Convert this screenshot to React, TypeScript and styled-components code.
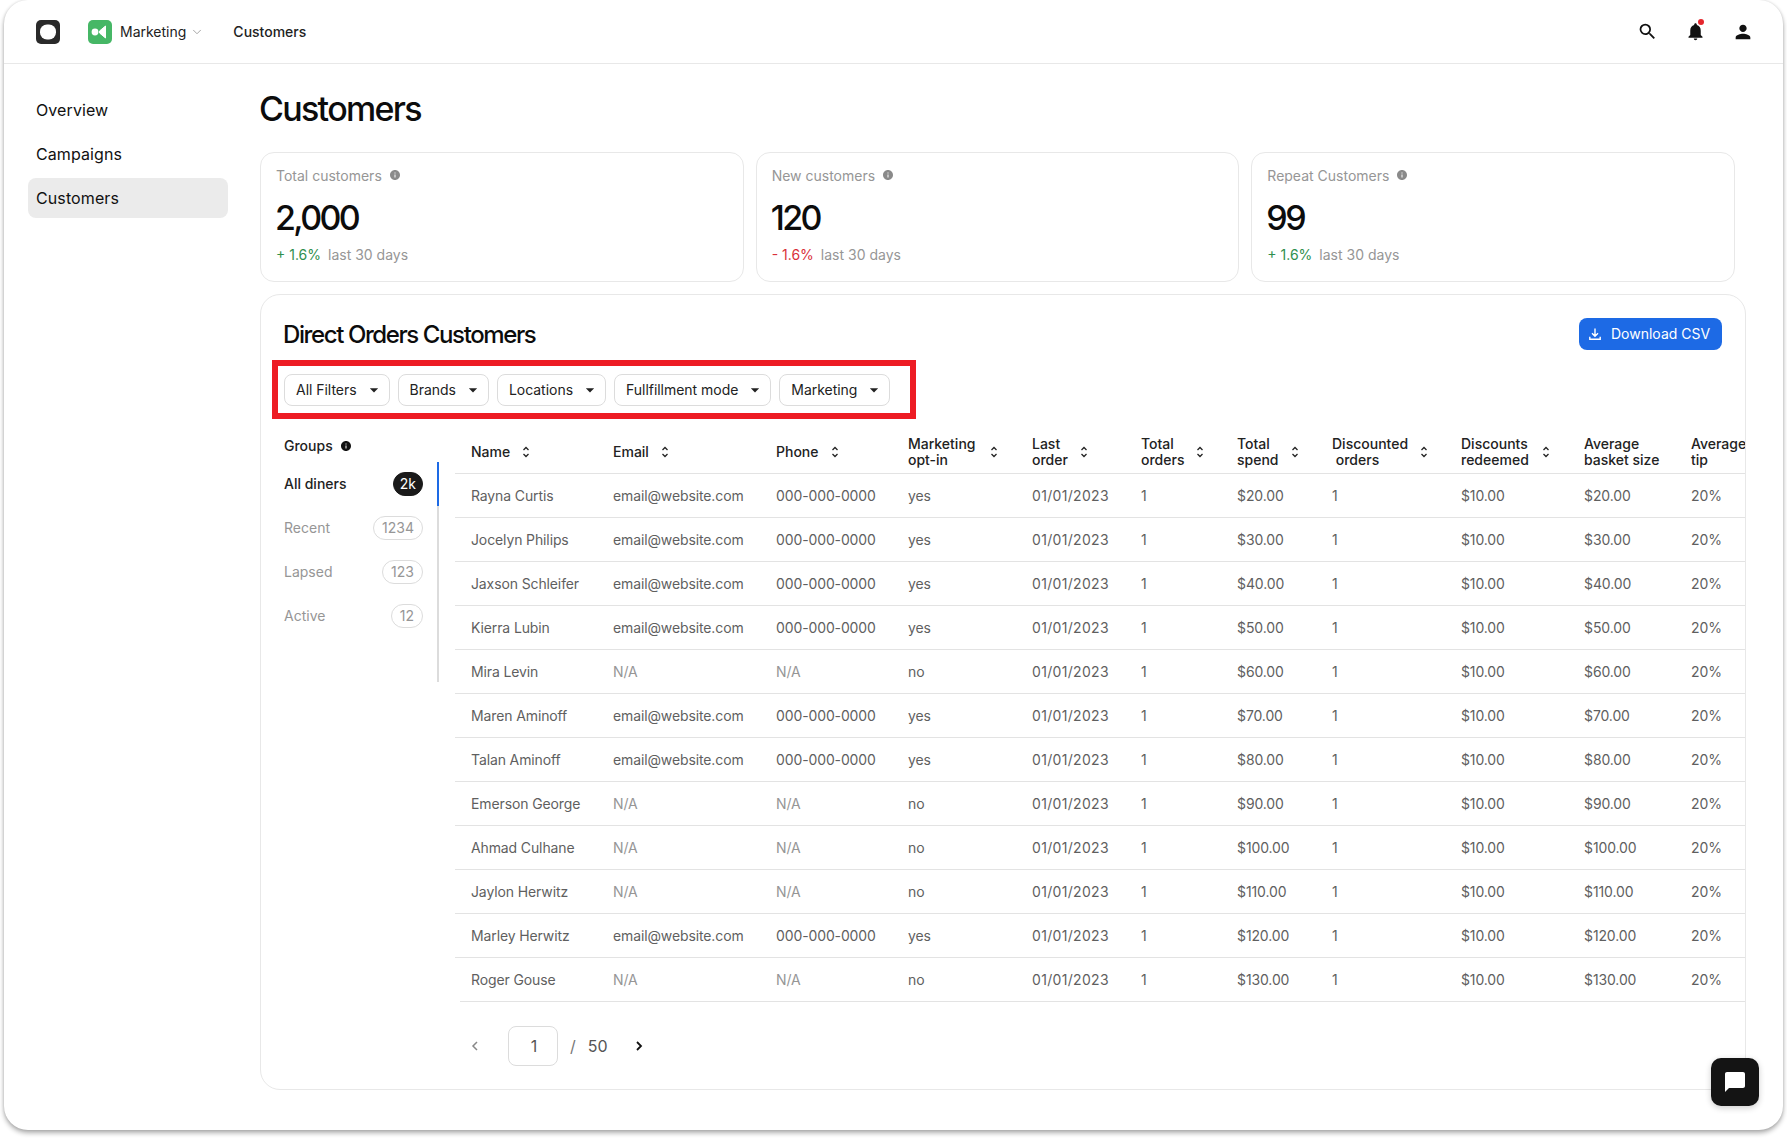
import React from 'react';
import styled, { createGlobalStyle } from 'styled-components';
import { MdSearch, MdNotifications, MdPerson, MdArrowDropDown, MdInfo, MdChatBubble } from 'react-icons/md';
import { ChevronDown } from 'lucide-react';

interface Customer {
  name: string;
  spend: number;
  optIn: boolean;
}

const customers: Customer[] = [
  { name: 'Rayna Curtis', spend: 20, optIn: true },
  { name: 'Jocelyn Philips', spend: 30, optIn: true },
  { name: 'Jaxson Schleifer', spend: 40, optIn: true },
  { name: 'Kierra Lubin', spend: 50, optIn: true },
  { name: 'Mira Levin', spend: 60, optIn: false },
  { name: 'Maren Aminoff', spend: 70, optIn: true },
  { name: 'Talan Aminoff', spend: 80, optIn: true },
  { name: 'Emerson George', spend: 90, optIn: false },
  { name: 'Ahmad Culhane', spend: 100, optIn: false },
  { name: 'Jaylon Herwitz', spend: 110, optIn: false },
  { name: 'Marley Herwitz', spend: 120, optIn: true },
  { name: 'Roger Gouse', spend: 130, optIn: false },
];

const columns = [
  { lines: ['Name'], width: 158, sort: true, gap: 12 },
  { lines: ['Email'], width: 163, sort: true, gap: 12 },
  { lines: ['Phone'], width: 132, sort: true, gap: 12 },
  { lines: ['Marketing', 'opt-in'], width: 124, sort: true, gap: 15 },
  { lines: ['Last', 'order'], width: 109, sort: true, gap: 12 },
  { lines: ['Total', 'orders'], width: 96, sort: true, gap: 12 },
  { lines: ['Total', 'spend'], width: 95, sort: true, gap: 12 },
  { lines: ['Discounted', '\u00a0orders'], width: 129, sort: true, gap: 12 },
  { lines: ['Discounts', 'redeemed'], width: 123, sort: true, gap: 13 },
  { lines: ['Average', 'basket size'], width: 107, sort: false, gap: 0 },
  { lines: ['Average', 'tip'], width: 54, sort: false, gap: 0 },
];

const stats = [
  { label: 'Total customers', value: '2,000', delta: '+ 1.6%', up: true },
  { label: 'New customers', value: '120', delta: '- 1.6%', up: false },
  { label: 'Repeat Customers', value: '99', delta: '+ 1.6%', up: true },
];

const groups = [
  { label: 'All diners', count: '2k', active: true },
  { label: 'Recent', count: '1234', active: false },
  { label: 'Lapsed', count: '123', active: false },
  { label: 'Active', count: '12', active: false },
];

const filters = ['All Filters', 'Brands', 'Locations', 'Fullfillment mode', 'Marketing'];

const GlobalStyle = createGlobalStyle`
  * {
    box-sizing: border-box;
  }
  html, body {
    margin: 0;
    background: #ffffff;
  }
  body {
    font-family: Inter, "Liberation Sans", sans-serif;
    font-size: 14px;
    color: #111111;
  }
`;

const SortIcon = () => (
  <SortSvg viewBox="0 0 8 14" width="8" height="14">
    <path d="M1.5 5 L4 2.5 L6.5 5 M1.5 9 L4 11.5 L6.5 9" fill="none" stroke="#222" strokeWidth="1.3" />
  </SortSvg>
);

const BrandMark = () => (
  <svg width="24" height="24" viewBox="0 0 24 24">
    <rect width="24" height="24" rx="5" fill="#2a2a2a" />
    <rect x="4" y="4.5" width="16" height="15" rx="7" fill="#fff" />
  </svg>
);

const ProductMark = () => (
  <svg width="24" height="24" viewBox="0 0 24 24">
    <rect width="24" height="24" rx="5" fill="#46b766" />
    <circle cx="7" cy="12" r="3.4" fill="#fff" />
    <path d="M17.5 6 V18 L11.8 13.2 Q10.6 12 11.8 10.8 Z" fill="#fff" stroke="#fff" strokeLinejoin="round" />
  </svg>
);

const DownloadIcon = () => (
  <svg width="14" height="14" viewBox="0 0 14 14">
    <path
      d="M7 1.5 V9 M4 6.2 L7 9.2 L10 6.2 M1.8 9.8 V12.2 H12.2 V9.8"
      fill="none"
      stroke="#fff"
      strokeWidth="1.4"
    />
  </svg>
);

const PageChevron = ({ next }: { next?: boolean }) => (
  <svg width="8" height="12" viewBox="0 0 8 12">
    <path
      d={next ? 'M2 2 L6 6 L2 10' : 'M6 2 L2 6 L6 10'}
      fill="none"
      stroke={next ? '#111' : '#888'}
      strokeWidth={next ? 1.8 : 1.5}
    />
  </svg>
);

export default function App() {
  return (
    <>
      <GlobalStyle />
      <Page>
        <Frame>
          <TopBar>
            <BrandMark />
            <Product>
              <ProductMark />
              <ProductName>Marketing</ProductName>
              <ChevronDown size={14} color="#999" strokeWidth={1.5} />
            </Product>
            <Crumb>Customers</Crumb>
            <TopActions>
              <IconButton>
                <MdSearch size={21} />
              </IconButton>
              <IconButton>
                <MdNotifications size={21} />
                <RedDot />
              </IconButton>
              <IconButton>
                <MdPerson size={22} />
              </IconButton>
            </TopActions>
          </TopBar>

          <Body>
            <Sidebar>
              <NavItem>Overview</NavItem>
              <NavItem>Campaigns</NavItem>
              <NavItem $active>Customers</NavItem>
            </Sidebar>

            <Main>
              <Heading>Customers</Heading>
              <StatGrid>
                {stats.map((s) => (
                  <StatCard key={s.label}>
                    <StatLabel>
                      {s.label}
                      <MdInfo size={12} color="#8a8a8a" />
                    </StatLabel>
                    <StatValue>{s.value}</StatValue>
                    <StatFoot>
                      <Delta $up={s.up}>{s.delta}</Delta>
                      <span>last 30 days</span>
                    </StatFoot>
                  </StatCard>
                ))}
              </StatGrid>

              <Panel>
                <PanelHead>
                  <PanelTitle>Direct Orders Customers</PanelTitle>
                  <DownloadButton>
                    <DownloadIcon />
                    Download CSV
                  </DownloadButton>
                </PanelHead>

                <FilterBar>
                  {filters.map((f) => (
                    <FilterButton key={f}>
                      <FilterText>{f}</FilterText>
                      <MdArrowDropDown size={20} color="#222" />
                    </FilterButton>
                  ))}
                </FilterBar>

                <PanelBody>
                  <Groups>
                    <GroupsTitle>
                      Groups
                      <MdInfo size={12} color="#111" />
                    </GroupsTitle>
                    <GroupList>
                      {groups.map((g) => (
                        <GroupItem key={g.label} $active={g.active}>
                          {g.label}
                          <CountBadge $active={g.active}>{g.count}</CountBadge>
                        </GroupItem>
                      ))}
                    </GroupList>
                  </Groups>

                  <TableWrap>
                    <Table>
                      <colgroup>
                        {columns.map((c) => (
                          <Col key={c.lines.join()} $w={c.width} />
                        ))}
                      </colgroup>
                      <thead>
                        <tr>
                          {columns.map((c) => (
                            <Th key={c.lines.join()}>
                              <HeadInner $gap={c.gap}>
                                <span>
                                  {c.lines.map((l) => (
                                    <HeadLine key={l}>{l}</HeadLine>
                                  ))}
                                </span>
                                {c.sort && <SortIcon />}
                              </HeadInner>
                            </Th>
                          ))}
                        </tr>
                      </thead>
                      <tbody>
                        {customers.map((c) => (
                          <tr key={c.name}>
                            <Td>{c.name}</Td>
                            <Td $muted={!c.optIn}>{c.optIn ? 'email@website.com' : 'N/A'}</Td>
                            <Td $muted={!c.optIn}>{c.optIn ? '000-000-0000' : 'N/A'}</Td>
                            <Td>{c.optIn ? 'yes' : 'no'}</Td>
                            <DateCell>01/01/2023</DateCell>
                            <Td>1</Td>
                            <Td>${c.spend}.00</Td>
                            <Td>1</Td>
                            <Td>$10.00</Td>
                            <Td>${c.spend}.00</Td>
                            <Td>20%</Td>
                          </tr>
                        ))}
                      </tbody>
                    </Table>

                    <Pager>
                      <PageChevron />
                      <PageBox>1</PageBox>
                      <PageSlash>/</PageSlash>
                      <PageTotal>50</PageTotal>
                      <PageChevron next />
                    </Pager>
                  </TableWrap>
                </PanelBody>
              </Panel>
            </Main>
          </Body>

          <ChatButton>
            <MdChatBubble size={24} color="#fff" />
          </ChatButton>
        </Frame>
      </Page>
    </>
  );
}

const Page = styled.div`
  height: 1138px;
  padding: 0 4px 8px;
  overflow: hidden;
`;

const Frame = styled.div`
  position: relative;
  height: 1130px;
  background: #ffffff;
  border-radius: 24px;
  box-shadow: 0 3px 5px rgba(0, 0, 0, 0.32), 0 0 3px rgba(0, 0, 0, 0.12);
`;

const TopBar = styled.header`
  display: flex;
  align-items: center;
  height: 64px;
  padding: 0 16px 0 32px;
  border-bottom: 1px solid #e8e8e8;
`;

const Product = styled.div`
  display: flex;
  align-items: center;
  margin-left: 28px;
`;

const ProductName = styled.span`
  margin: 0 4px 0 8px;
  font-size: 14px;
  color: #222;
`;

const Crumb = styled.span`
  margin-left: 29px;
  font-size: 14px;
  font-weight: 450;
  color: #222;
`;

const TopActions = styled.div`
  display: flex;
  margin-left: auto;
`;

const IconButton = styled.div`
  position: relative;
  display: flex;
  align-items: center;
  justify-content: center;
  width: 48px;
  height: 32px;
  color: #111;
`;

const RedDot = styled.span`
  position: absolute;
  top: 3px;
  left: 27px;
  width: 6px;
  height: 6px;
  border-radius: 50%;
  background: #e5262d;
`;

const Body = styled.div`
  display: flex;
  padding-left: 24px;
`;

const Sidebar = styled.nav`
  display: flex;
  flex-direction: column;
  gap: 4px;
  width: 200px;
  padding-top: 26px;
  flex-shrink: 0;
`;

const NavItem = styled.div<{ $active?: boolean }>`
  display: flex;
  align-items: center;
  height: 40px;
  padding-left: 8px;
  border-radius: 8px;
  font-size: 16px;
  letter-spacing: 0.1px;
  color: #111;
  background: ${(p) => (p.$active ? '#ebebeb' : 'transparent')};
`;

const Main = styled.main`
  width: 1486px;
  margin-left: 32px;
  padding-top: 22px;
`;

const Heading = styled.h1`
  height: 44px;
  margin: 0 0 22px -1px;
  font-size: 34px;
  line-height: 45px;
  font-weight: 500;
  letter-spacing: -1.7px;
  color: #0c0c0c;
`;

const StatGrid = styled.div`
  display: grid;
  grid-template-columns: repeat(3, 1fr);
  gap: 12px;
  margin-right: 11px;
`;

const StatCard = styled.section`
  height: 130px;
  padding: 13px 15px 0;
  border: 1px solid #e8e8e8;
  border-radius: 14px;
`;

const StatLabel = styled.div`
  display: flex;
  align-items: center;
  gap: 7px;
  height: 18px;
  font-size: 14px;
  color: #969696;
`;

const StatValue = styled.div`
  height: 40px;
  margin: 14px 0 0 -1px;
  font-size: 34px;
  line-height: 40px;
  font-weight: 500;
  letter-spacing: -2.6px;
  color: #0c0c0c;
`;

const StatFoot = styled.div`
  display: flex;
  gap: 7px;
  margin-top: 8px;
  font-size: 14px;
  line-height: 18px;
  color: #969696;
`;

const Delta = styled.span<{ $up: boolean }>`
  color: ${(p) => (p.$up ? '#2f8f4e' : '#d9303a')};
`;

const Panel = styled.section`
  height: 796px;
  margin-top: 12px;
  border: 1px solid #e8e8e8;
  border-radius: 20px;
  overflow: hidden;
`;

const PanelHead = styled.div`
  display: flex;
  align-items: center;
  justify-content: space-between;
  height: 32px;
  margin-top: 23px;
  padding: 0 23px 0 22px;
`;

const PanelTitle = styled.h2`
  margin: 1px 0 0;
  font-size: 24px;
  font-weight: 500;
  letter-spacing: -1.4px;
  color: #0c0c0c;
`;

const DownloadButton = styled.button`
  display: flex;
  align-items: center;
  gap: 9px;
  width: 143px;
  height: 32px;
  padding: 0 0 1px 9px;
  border: 0;
  border-radius: 8px;
  background: #1d6ae5;
  color: #ffffff;
  font: inherit;
  font-size: 14px;
`;

const FilterBar = styled.div`
  display: flex;
  gap: 8px;
  width: 644px;
  height: 59px;
  margin: 10px 0 0 11px;
  padding: 8px 6px;
  border: 6px solid #ed1c24;
`;

const FilterButton = styled.div`
  display: flex;
  align-items: center;
  gap: 7px;
  height: 32px;
  padding: 0 5px 0 11px;
  border: 1px solid #dcdcdc;
  border-radius: 8px;
`;

const FilterText = styled.span`
  padding-bottom: 1px;
  font-size: 14px;
  letter-spacing: -0.03px;
  color: #222;
  white-space: nowrap;
`;

const PanelBody = styled.div`
  display: flex;
  gap: 16px;
  margin-top: 12px;
  padding-left: 23px;
`;

const Groups = styled.aside`
  flex: 0 0 155px;
`;

const GroupsTitle = styled.div`
  display: flex;
  align-items: center;
  gap: 7px;
  height: 29px;
  font-size: 14px;
  font-weight: 450;
  color: #222;
  margin-bottom: 2px;
`;

const GroupList = styled.div`
  height: 220px;
  border-right: 2px solid #dcdcdc;
`;

const GroupItem = styled.div<{ $active: boolean }>`
  display: flex;
  align-items: center;
  justify-content: space-between;
  height: 44px;
  margin-right: -2px;
  padding: 0 14px 1px 0;
  border-right: 2px solid ${(p) => (p.$active ? '#1d6ae5' : 'transparent')};
  font-size: 14px;
  font-weight: ${(p) => (p.$active ? 450 : 400)};
  color: ${(p) => (p.$active ? '#222' : '#969696')};
`;

const CountBadge = styled.span<{ $active: boolean }>`
  display: flex;
  align-items: center;
  height: 24px;
  padding: 0 ${(p) => (p.$active ? 6 : 8)}px;
  border: 1px solid ${(p) => (p.$active ? '#1a1a1a' : '#dcdcdc')};
  border-radius: 12px;
  font-weight: 400;
  color: ${(p) => (p.$active ? '#ffffff' : '#969696')};
  background: ${(p) => (p.$active ? '#1a1a1a' : 'transparent')};
`;

const TableWrap = styled.div`
  flex: 1;
  min-width: 0;
`;

const Table = styled.table`
  width: 1290px;
  table-layout: fixed;
  border-collapse: separate;
  border-spacing: 0;

  th:first-child,
  td:first-child {
    padding-left: 16px;
  }

  tbody tr:last-child td {
    border-bottom-color: transparent;
    background: linear-gradient(#e3e3e3, #e3e3e3) bottom right / 100% 1px no-repeat;
    background-origin: border-box;
    background-clip: border-box;
  }

  tbody tr:last-child td:first-child {
    background-size: calc(100% - 5px) 1px;
  }
`;

const Col = styled.col<{ $w: number }>`
  width: ${(p) => p.$w}px;
`;

const Th = styled.th`
  height: 43px;
  padding: 0;
  border-bottom: 1px solid #e3e3e3;
  font-size: 14px;
  font-weight: 450;
  line-height: 16px;
  text-align: left;
  color: #222;
  white-space: nowrap;
`;

const HeadInner = styled.div<{ $gap: number }>`
  display: flex;
  align-items: center;
  gap: ${(p) => p.$gap}px;
`;

const HeadLine = styled.span`
  display: block;
`;

const SortSvg = styled.svg`
  flex-shrink: 0;
`;

const Td = styled.td<{ $muted?: boolean }>`
  height: 44px;
  padding: 0;
  border-bottom: 1px solid #e3e3e3;
  font-size: 14px;
  letter-spacing: -0.12px;
  color: ${(p) => (p.$muted ? '#969696' : '#5f5f5f')};
  white-space: nowrap;
`;

const DateCell = styled(Td)`
  letter-spacing: 0.32px;
`;

const Pager = styled.div`
  display: flex;
  align-items: center;
  height: 40px;
  margin-top: 24px;
  padding-left: 16px;
`;

const PageBox = styled.div`
  display: flex;
  align-items: center;
  justify-content: center;
  width: 50px;
  height: 40px;
  margin-left: 29px;
  padding-left: 2px;
  border: 1px solid #dcdcdc;
  border-radius: 8px;
  font-size: 16px;
  color: #555;
`;

const PageSlash = styled.span`
  margin-left: 12px;
  font-size: 16px;
  color: #777;
`;

const PageTotal = styled.span`
  margin: 0 27px 0 12px;
  font-size: 16px;
  color: #555;
`;

const ChatButton = styled.div`
  position: absolute;
  top: 1058px;
  left: 1707px;
  display: flex;
  align-items: center;
  justify-content: center;
  width: 48px;
  height: 48px;
  border-radius: 10px;
  background: #141414;
  box-shadow: 0 2px 6px rgba(0, 0, 0, 0.2);
`;
